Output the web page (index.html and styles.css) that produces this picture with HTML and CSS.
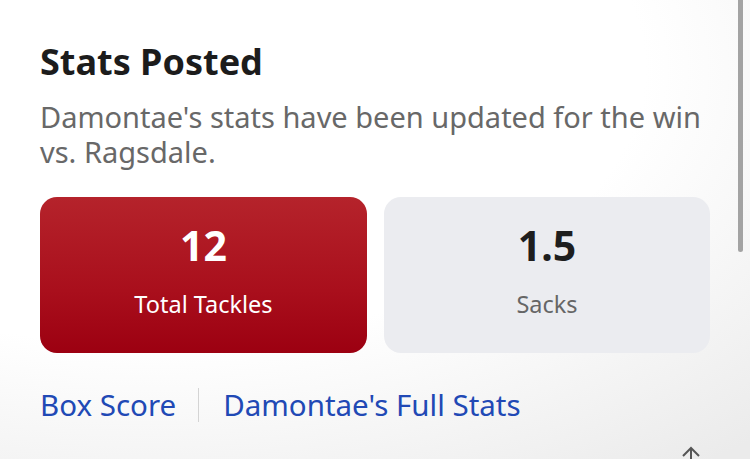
FILE: index.html
```html
<!DOCTYPE html>
<html>
<head>
<meta charset="utf-8">
<link rel="stylesheet" href="styles.css">
</head>
<body>
<div class="page">
  <h1 class="title">Stats Posted</h1>
  <p class="desc">Damontae's stats have been updated for the win vs. Ragsdale.</p>
  <div class="cards">
    <div class="card card-red">
      <div class="value">12</div>
      <div class="label">Total Tackles</div>
    </div>
    <div class="card card-grey">
      <div class="value">1.5</div>
      <div class="label">Sacks</div>
    </div>
  </div>
  <div class="links">
    <a class="link">Box Score</a>
    <span class="divider"></span>
    <a class="link">Damontae's Full Stats</a>
  </div>
</div>
<div class="scrollbar"></div>
<svg class="up-arrow" width="22" height="16" viewBox="0 0 22 16"><path d="M11 15V2M3 10l8-8 8 8" fill="none" stroke="#555" stroke-width="2"/></svg>
</body>
</html>
```
FILE: styles.css
```css
html, body {
  margin: 0;
  height: 100%;
}
body {
  width: 750px;
  height: 459px;
  overflow: hidden;
  position: relative;
  font-family: "Noto Sans", "Open Sans", sans-serif;
  background: radial-gradient(ellipse 900px 500px at 20% 15%, #ffffff 55%, #ebebeb 100%);
}
.page {
  padding: 40px 40px 0 40px;
}
.title {
  margin: 0;
  font-size: 36px;
  line-height: 44px;
  font-weight: 700;
  color: #1c1c1c;
}
.desc {
  margin: 15px 0 0 0;
  font-size: 29px;
  line-height: 35px;
  color: #686868;
  width: 690px;
}
.cards {
  display: grid;
  grid-template-columns: 327px 326px;
  gap: 17px;
  margin-top: 28px;
}
.card {
  height: 156px;
  border-radius: 17px;
  display: flex;
  flex-direction: column;
  align-items: center;
}
.card-red {
  background: linear-gradient(180deg, #b5232b 0%, #a90f1c 60%, #9c0011 100%);
  color: #ffffff;
}
.card-grey {
  background: #ebecf0;
  color: #1e1e1e;
}
.value {
  margin-top: 24px;
  font-size: 41px;
  line-height: 48px;
  font-weight: 700;
}
.card-grey .label {
  color: #666666;
}
.label {
  margin-top: 20px;
  font-size: 23.5px;
  line-height: 30px;
}
.links {
  display: flex;
  align-items: center;
  margin-top: 34px;
}
.link {
  font-size: 29.5px;
  line-height: 36px;
  color: #2149b5;
}
.divider {
  width: 1px;
  height: 34px;
  background: #d4d4d4;
  margin: 0 24px 0 22px;
}
.scrollbar {
  position: absolute;
  right: 7px;
  top: 0;
  width: 5px;
  height: 252px;
  background: #a3a3a3;
  border-radius: 0 0 3px 3px;
}
.up-arrow {
  position: absolute;
  left: 680px;
  top: 446px;
}
```
